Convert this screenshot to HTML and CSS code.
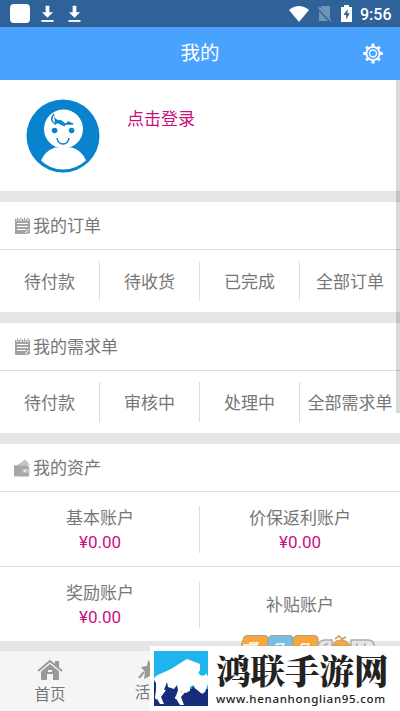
FILE: index.html
```html
<!DOCTYPE html>
<html lang="zh-CN">
<head>
<meta charset="utf-8">
<meta name="viewport" content="width=device-width, initial-scale=1">
<title>我的</title>
<link rel="stylesheet" href="styles.css">
</head>
<body>
<svg class="defs" width="0" height="0">
  <symbol id="note" viewBox="0 0 17 18">
    <path d="M1 2h15v11l-4 4H1z" fill="#a2a2a2"/>
    <path d="M3.5 0v4M7 0v4M10.5 0v4M14 0v4" stroke="#fff" stroke-width="2"/>
    <path d="M3.5 .5v3M7 .5v3M10.5 .5v3M14 .5v3" stroke="#999" stroke-width="1"/>
    <path d="M3 6.5h11M3 9.5h11M3 12.5h9" stroke="#fff" stroke-width="1"/>
    <path d="M11 16l4-4" stroke="#fff"/>
    <path d="M12 17l4-4v3z" fill="#999"/>
  </symbol>
  <symbol id="download" viewBox="0 0 14 18">
    <path d="M5 0h4v7h4l-6 6-6-6h4z" fill="#fff"/><path d="M.5 16.5h13" stroke="#fff" stroke-width="2"/>
  </symbol>
</svg>
<div class="screen">
  <div class="status">
    <span class="app"></span>
    <svg class="dl" width="13" height="18"><use href="#download"/></svg>
    <svg class="dl" width="13" height="18"><use href="#download"/></svg>
    <span class="fill"></span>
    <svg class="wifi" width="20" height="16" viewBox="0 0 20 16"><path d="M0 4Q10-4 20 4L10 16z" fill="#fff"/></svg>
    <svg class="sim" width="15" height="17" viewBox="0 0 15 17"><path d="M5 1h8v14L2 4zM2 6l9 10H2z" fill="#7193b8"/><path d="M1 2l13 14" stroke="#7193b8" stroke-width="1.4"/></svg>
    <svg class="battery" width="11" height="17" viewBox="0 0 11 17"><path d="M3 0h5v2h3v15H0V2h3z" fill="#fff"/><path d="M6.7 4L2.5 10h2.6v4.5L8.8 8.3H6.4z" fill="#2e6299"/></svg>
    <span class="time">9:56</span>
  </div>
  <header class="header">
    <h1>我的</h1>
    <svg class="gear" width="20" height="21" viewBox="-10 -10.5 20 21">
      <g stroke="#fff" fill="none"><circle r="6.6" stroke-width="1.9"/><circle r="3.5" stroke-width="1.4"/>
      <path stroke-width="3" d="M0-7v-3M0 7v3M-7 0h-2.8M7 0h2.8M-5-5l-1.8-1.8M5-5l1.8-1.8M-5 5l-1.8 1.8M5 5l1.8 1.8"/></g>
    </svg>
  </header>
  <section class="profile">
    <svg class="avatar" width="74" height="74" viewBox="0 0 74 74">
      <circle cx="37" cy="37" r="36.5" fill="#0a83cf"/>
      <path d="M15 61.500Q19 52 29 48.500h17q10 3 14 13Q50 70.500 37 70.500T15 61.500z" fill="#fff"/>
      <circle cx="37.500" cy="30" r="19.500" fill="#fff"/>
      <path d="M28 15q-5 6 1 10 2-3 5-.5l4 2q0-3 9-1.500" fill="none" stroke="#0a83cf" stroke-width="1.500"/>
      <path d="M28 16q1 6 7 5l5 4 2-3 6 3-9 1-5-2-5 1z" fill="#0a83cf"/>
      <circle cx="28.600" cy="31.500" r="2.800" fill="#0a83cf"/><circle cx="45.600" cy="31.500" r="2.800" fill="#0a83cf"/>
      <path d="M31 39q1 6 6 6t6-6" fill="none" stroke="#0a83cf" stroke-width="1.500"/>
    </svg>
    <a class="login">点击登录</a>
  </section>
  <section class="card">
    <h2><svg width="17" height="18"><use href="#note"/></svg>我的订单</h2>
    <div class="row"><span>待付款</span><span>待收货</span><span>已完成</span><span>全部订单</span></div>
  </section>
  <section class="card">
    <h2><svg width="17" height="18"><use href="#note"/></svg>我的需求单</h2>
    <div class="row"><span>待付款</span><span>审核中</span><span>处理中</span><span>全部需求单</span></div>
  </section>
  <section class="card">
    <h2><svg width="17" height="18" viewBox="0 0 18 18"><path d="M3 6l9-6 5 6z" fill="#c4c4c4"/><path d="M0 6h14l2 2v9q0 1-1 1H1q-1 0-1-1z" fill="#a9a7a5"/><path d="M9.500 10h7v4h-7q-2-2 0-4z" fill="#c9c7c5"/><circle cx="11.500" cy="12" r="1" fill="#fff"/></svg>我的资产</h2>
    <div class="assets">
      <div class="asset"><span>基本账户</span><b>¥0.00</b></div>
      <div class="asset"><span>价保返利账户</span><b>¥0.00</b></div>
      <div class="asset"><span>奖励账户</span><b>¥0.00</b></div>
      <div class="asset"><span>补贴账户</span></div>
    </div>
  </section>
  <nav class="tabs">
    <div class="tab">
      <svg width="26" height="22" viewBox="0 0 26 22"><path d="M1 12L13 2l12 10" fill="none" stroke="#999" stroke-width="2"/><path d="M18 2h4v7l-4-3z" fill="#999"/><path d="M4 12.500l9-7.500 9 7.500V20q0 1-1 1h-5v-6h-6v6H5q-1 0-1-1z" fill="#999"/><path d="M11 11h4v2h-4z" fill="#f5f5f5"/></svg>
      <span>首页</span>
    </div>
    <div class="tab activity">
      <svg width="26" height="22" viewBox="0 0 26 22"><path d="M11 1l4 5 8 1-5 6 1 7-6-3-6 3 1-7-4-5 6-1z" fill="#999"/><path d="M2 19l5-6" stroke="#999" stroke-width="2"/></svg>
      <span>活</span>
    </div>
    <div class="tab"></div><div class="tab"></div>
  </nav>
  <div class="scrollbar"></div>
  <div class="mark"><svg width="140" height="11" viewBox="0 0 140 11">
    <g stroke="#a99f8c" stroke-width="1">
      <path d="M0 11l3-9q1-1.500 3-1.500h18q3 0 3 3v8z" fill="#f6a63c"/>
      <path d="M26 11l2-9q1-1.500 3-1.500h18q3 0 3 3v8z" fill="#78bfe3"/>
      <path d="M51 11l2-9q1-1.500 3-1.500h17q4 0 4 3v8z" fill="#f6a63c"/>
    </g>
    <path d="M2 10h14l1-2H8M35 11l1-2h7l-1 2M60 11l1-2h7l-1 2" fill="none" stroke="#fff" stroke-width="1.300"/>
    <path d="M77 11q1-6 7-6h7v6M110 11V5h17q6 0 6 6M83 11q1-2 4-2M116 11V8M124 11V8" fill="none" stroke="#aaa" stroke-width="1.500"/>
    <path d="M92 11q1-6 8-6t9 6z" fill="#f6a63c" stroke="#a99f8c"/>
    <path d="M94 4l4-3 3 3 4-2" fill="none" stroke="#c9964f" stroke-width="1.500"/>
  </svg></div>
  <div class="banner">
    <svg width="54" height="55" viewBox="0 0 54 55">
      <path d="M0 0h54v55H0z" fill="#20b4ee"/><path d="M0 38h54v17H0z" fill="#182d79"/>
      <path d="M0 28Q1 25 6 23L17 18 28 11l5-3 13 5v6q3 1 4-1l4 8v7l-3 8-3 2-6-5-3-4-3 2v14H0z" fill="#fff"/>
      <path d="M0 29l2 3v7l-1 7 1 3 8-10 3-8 1 5 6 2 3-4 1 5-3 9h4l2-8 5 2 5-3 2-4 4 6 1 4 4-3v13H0z" fill="#182d79"/>
      <path d="M12 39H8l-6 7 4 7h4l-3-7zM33 39h-4l-8 7 5 8h4l-3-8z" fill="#fff"/>
      <path d="M48 10q-2 4 2 6 1 3-3 3-3 1-2 4 3 3 6 1 4-3 1-8-1-4-4-6z" fill="#20b4ee"/>
    </svg>
    <div class="brand"><strong>鸿联手游网</strong><span>www.henanhonglian95.com</span></div>
  </div>
</div>
</body>
</html>
```

FILE: styles.css
```css
* { box-sizing: border-box; }
body {
  margin: 0;
  color: #777;
  font-family: Roboto, "Noto Sans CJK SC", sans-serif;
  font-size: 17px;
}
h1, h2 { margin: 0; font-weight: 400; }
svg { display: block; flex: none; }
.defs { position: absolute; }
.screen {
  position: relative;
  display: flex;
  flex-direction: column;
  width: 400px;
  height: 711px;
  overflow: hidden;
  background: #fff;
}
.status {
  display: flex;
  align-items: center;
  height: 27px;
  padding: 0 9px 0 10px;
  background: #2e6299;
  color: #fff;
}
.app { width: 20px; height: 19px; border-radius: 4px; background: #fff; }
.dl { margin-left: 11px; }
.dl + .dl { margin-left: 14px; }
.fill { flex: 1; }
.wifi { margin-right: 2px; }
.sim { margin-left: 6px; }
.battery { margin: 0 8px 0 9px; }
.time { font-size: 16px; font-weight: 500; line-height: 27px; padding-top: 1px; width: 31px; white-space: nowrap; }
.header {
  display: grid;
  grid-template-columns: 60px 1fr 60px;
  align-items: center;
  height: 53px;
  background: #4aa2ff;
  color: #fff;
}
.header h1 { grid-column: 2; text-align: center; font-size: 19.5px; line-height: 53px; }
.gear { margin-left: 23px; }
.profile {
  display: flex;
  height: 111px;
  padding: 19px 26px;
}
.login { margin: 7px 0 0 27px; line-height: 26px; color: #cb0f82; }
.card { border-top: 11px solid #e5e5e5; }
.card h2 {
  display: flex;
  align-items: center;
  gap: 2px;
  height: 48px;
  padding-left: 14px;
  border-bottom: 1px solid #dedede;
  font-size: 17px;
  line-height: 47px;
  padding-top: 1px;
}
.row {
  display: grid;
  grid-template-columns: repeat(4, 1fr);
  height: 62px;
  padding: 11px 0;
}
.row span {
  display: flex;
  align-items: center;
  justify-content: center;
  padding-bottom: 2px;
  border-right: 1px solid #dedede;
  white-space: nowrap;
}
.row span:last-child { border-right: 0; }
.assets { display: grid; grid-template-columns: 1fr 1fr; }
.asset {
  display: flex;
  flex-direction: column;
  align-items: center;
  justify-content: center;
  height: 75px;
  padding-top: 2px;
  border-bottom: 1px solid #dedede;
  line-height: 24px;
  background: linear-gradient(#dedede, #dedede) right center / 1px 47px no-repeat;
}
.asset:nth-child(even) { background: none; }
.asset:nth-child(n+3) { border-bottom: 0; height: 74px; }
.asset b { font-weight: 400; color: #cb0f82; }
.tabs {
  display: grid;
  grid-template-columns: repeat(4, 1fr);
  height: 70px;
  border-top: 10px solid #e5e5e5;
  background: #f5f5f5;
}
.tab {
  display: flex;
  flex-direction: column;
  align-items: center;
  padding-top: 8px;
  font-size: 15.5px;
  line-height: 25px;
}
.tab span { margin-top: 2px; }
.activity span { margin-top: 0; padding-right: 15px; }
.scrollbar {
  position: absolute;
  top: 80px;
  right: 0;
  width: 4px;
  height: 333px;
  background: rgba(0, 0, 0, .15);
}
.mark { position: absolute; left: 241px; top: 635px; }
.banner {
  position: absolute;
  left: 150px;
  top: 646px;
  display: flex;
  width: 250px;
  height: 65px;
  padding: 5px 0 0 4px;
  background: #fff;
  color: #222;
}
.brand { display: flex; flex-direction: column; margin-left: 8px; white-space: nowrap; }
.brand strong {
  font: 900 34.5px/36px "Noto Serif CJK SC", "Noto Sans CJK SC", serif;
}
.brand span {
  font: 500 11.5px/16px "Noto Sans", sans-serif;
  letter-spacing: .7px;
  margin-top: 4px;
}
```
